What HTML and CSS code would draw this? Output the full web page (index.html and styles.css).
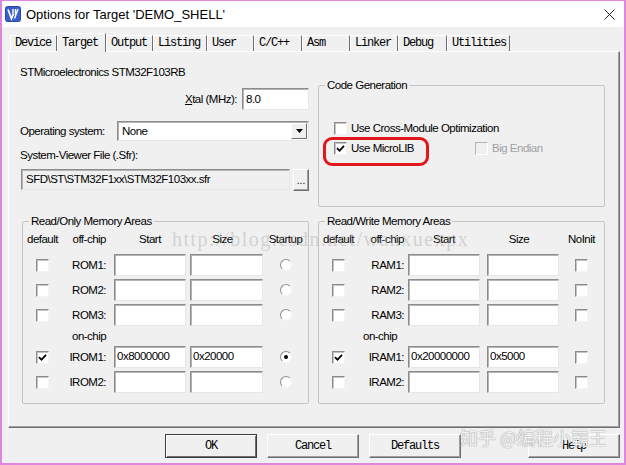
FILE: index.html
```html
<!DOCTYPE html>
<html>
<head>
<meta charset="utf-8">
<title>Options for Target</title>
<link rel="stylesheet" href="styles.css">
</head>
<body>
<div class="window">
  <div class="titlebar">
    <svg class="app-icon" viewBox="0 0 16 16" width="16" height="16">
      <rect x="0.5" y="0.5" width="15" height="15" rx="2" fill="#3a5fcd" stroke="#2a44a0"/>
      <path d="M3 3.5 L6.5 12.5 L8 8.5" fill="none" stroke="#fff" stroke-width="1.7"/>
      <path d="M8 3 V10 M10.5 3 V9 M13 3 L9.5 12.5" fill="none" stroke="#fff" stroke-width="1.4"/>
    </svg>
    <span class="title">Options for Target 'DEMO_SHELL'</span>
    <svg class="close" viewBox="0 0 11 11" width="11" height="11">
      <path d="M0.5 0.5 L10.5 10.5 M10.5 0.5 L0.5 10.5" stroke="#222" stroke-width="1" fill="none"/>
    </svg>
  </div>
  <div class="client">
    <div class="tabs">
      <div class="tab w47">Device</div>
      <div class="tab tab-active w49">Target</div>
      <div class="tab w47">Output</div>
      <div class="tab w54">Listing</div>
      <div class="tab w47">User</div>
      <div class="tab w48">C/C++</div>
      <div class="tab w48">Asm</div>
      <div class="tab w48">Linker</div>
      <div class="tab w49">Debug</div>
      <div class="tab w63">Utilities</div>
    </div>
    <div class="panel">
      <div class="top">
        <div class="col-left">
          <div class="chip">STMicroelectronics STM32F103RB</div>
          <div class="xtal-row">
            <span><u>X</u>tal (MHz):</span>
            <div class="edit xtal">8.0</div>
          </div>
          <div class="os-row">
            <span class="os-label">Operating system:</span>
            <div class="edit combo">
              <span class="combo-text">None</span>
              <span class="combo-btn">
                <svg viewBox="0 0 7 4" width="7" height="4"><path d="M0 0 H7 L3.5 4 Z" fill="#000"/></svg>
              </span>
            </div>
          </div>
          <div class="svf-label">System-Viewer File (.Sfr):</div>
          <div class="sfr-row">
            <div class="edit sfr">SFD\ST\STM32F1xx\STM32F103xx.sfr</div>
            <div class="btn-small">...</div>
          </div>
        </div>
        <fieldset class="group codegen">
          <legend>Code Generation</legend>
          <div class="check-row cross">
            <span class="cb"></span>
            <span>Use Cross-Module Optimization</span>
          </div>
          <div class="check-row micro">
            <div class="opt opt-micro">
              <span class="cb"><svg class="tick" viewBox="0 0 9 9" width="9" height="9"><path d="M1 4.2 L3.5 6.8 L8 1.8" fill="none" stroke="#000" stroke-width="1.8"/></svg></span>
              <span>Use MicroLIB</span>
            </div>
            <div class="opt disabled">
              <span class="cb cb-disabled"></span>
              <span>Big Endian</span>
            </div>
          </div>
          <div class="highlight"></div>
        </fieldset>
      </div>

      <div class="mem">
        <fieldset class="group memgroup">
          <legend>Read/Only Memory Areas</legend>
          <div class="memgrid rom">
            <span class="h-default">default</span>
            <span class="h-off">off-chip</span>
            <span class="h-start">Start</span>
            <span class="h-size">Size</span>
            <span class="h-last">Startup</span>

            <span class="cell-c"><span class="cb"></span></span>
            <span class="lbl">ROM1:</span>
            <span class="edit in-start"></span>
            <span class="edit in-size"></span>
            <span class="cell-c"><span class="radio"></span></span>

            <span class="cell-c"><span class="cb"></span></span>
            <span class="lbl">ROM2:</span>
            <span class="edit in-start"></span>
            <span class="edit in-size"></span>
            <span class="cell-c"><span class="radio"></span></span>

            <span class="cell-c"><span class="cb"></span></span>
            <span class="lbl">ROM3:</span>
            <span class="edit in-start"></span>
            <span class="edit in-size"></span>
            <span class="cell-c"><span class="radio"></span></span>

            <span></span>
            <span class="onchip">on-chip</span>
            <span></span><span></span><span></span>

            <span class="cell-c"><span class="cb"><svg class="tick" viewBox="0 0 9 9" width="9" height="9"><path d="M1 4.2 L3.5 6.8 L8 1.8" fill="none" stroke="#000" stroke-width="1.8"/></svg></span></span>
            <span class="lbl">IROM1:</span>
            <span class="edit in-start">0x8000000</span>
            <span class="edit in-size">0x20000</span>
            <span class="cell-c"><span class="radio radio-on"></span></span>

            <span class="cell-c"><span class="cb"></span></span>
            <span class="lbl">IROM2:</span>
            <span class="edit in-start"></span>
            <span class="edit in-size"></span>
            <span class="cell-c"><span class="radio"></span></span>
          </div>
        </fieldset>

        <fieldset class="group memgroup">
          <legend>Read/Write Memory Areas</legend>
          <div class="memgrid ram">
            <span class="h-default">default</span>
            <span class="h-off">off-chip</span>
            <span class="h-start">Start</span>
            <span class="h-size">Size</span>
            <span class="h-last">NoInit</span>

            <span class="cell-c"><span class="cb"></span></span>
            <span class="lbl">RAM1:</span>
            <span class="edit in-start"></span>
            <span class="edit in-size"></span>
            <span class="cell-c"><span class="cb"></span></span>

            <span class="cell-c"><span class="cb"></span></span>
            <span class="lbl">RAM2:</span>
            <span class="edit in-start"></span>
            <span class="edit in-size"></span>
            <span class="cell-c"><span class="cb"></span></span>

            <span class="cell-c"><span class="cb"></span></span>
            <span class="lbl">RAM3:</span>
            <span class="edit in-start"></span>
            <span class="edit in-size"></span>
            <span class="cell-c"><span class="cb"></span></span>

            <span></span>
            <span class="onchip">on-chip</span>
            <span></span><span></span><span></span>

            <span class="cell-c"><span class="cb"><svg class="tick" viewBox="0 0 9 9" width="9" height="9"><path d="M1 4.2 L3.5 6.8 L8 1.8" fill="none" stroke="#000" stroke-width="1.8"/></svg></span></span>
            <span class="lbl">IRAM1:</span>
            <span class="edit in-start">0x20000000</span>
            <span class="edit in-size">0x5000</span>
            <span class="cell-c"><span class="cb"></span></span>

            <span class="cell-c"><span class="cb"></span></span>
            <span class="lbl">IRAM2:</span>
            <span class="edit in-start"></span>
            <span class="edit in-size"></span>
            <span class="cell-c"><span class="cb"></span></span>
          </div>
        </fieldset>
      </div>
    </div>

    <div class="buttons">
      <div class="btn btn-default">OK</div>
      <div class="btn">Cancel</div>
      <div class="btn">Defaults</div>
      <div class="btn btn-help">Help</div>
    </div>
  </div>

  <div class="wm-csdn">http://blog.csdn.net/wanxuexpx</div>
  <div class="wm-zhihu">知乎 @编程小霸王</div>
</div>
</body>
</html>
```

FILE: styles.css
```css
* { box-sizing: border-box; }
html, body { margin: 0; padding: 0; }
body {
  width: 626px;
  height: 465px;
  overflow: hidden;
  background: #fff;
  font-family: "Liberation Sans", Arial, sans-serif;
  font-size: 11.5px;
  letter-spacing: -0.5px;
  color: #000;
}

.window {
  position: relative;
  width: 626px;
  height: 465px;
  border: 1px solid #df84df;
  border-left-width: 2px;
  border-right-width: 2px;
  border-bottom-width: 2px;
  background: #f0f0f0;
  display: flex;
  flex-direction: column;
}

/* title bar */
.titlebar {
  flex: none;
  height: 26px;
  background: #fff;
  display: flex;
  align-items: center;
}
.app-icon { margin-left: 3px; flex: none; }
.title {
  margin-left: 5px;
  font-size: 13px;
  letter-spacing: 0;
  color: #000;
}
.close { margin-left: auto; margin-right: 9px; flex: none; }

/* client area */
.client { flex: 1; display: flex; flex-direction: column; }

.tabs {
  height: 24px;
  padding-top: 6px;
  padding-left: 8px;
  display: flex;
  align-items: flex-end;
}
.tab {
  height: 16px;
  padding-left: 4px;
  font-family: "Liberation Mono", "Courier New", monospace;
  font-size: 12px;
  letter-spacing: -1.2px;
  line-height: 15px;
  border-top: 1px solid #fff;
  border-left: 1px solid #fff;
  border-right: 1px solid #6e6e6e;
  white-space: nowrap;
  overflow: hidden;
}
.tab-active {
  position: relative;
  z-index: 1;
  height: 19px;
  margin-bottom: -1px;
  line-height: 18px;
  background: #f0f0f0;
}
.w47 { width: 47px; }
.w48 { width: 48px; }
.w49 { width: 49px; }
.w54 { width: 54px; }
.w63 { width: 63px; }

.panel {
  margin-left: 6px;
  width: 612px;
  height: 377px;
  border-top: 1px solid #fff;
  border-left: 1px solid #fff;
  border-right: 1px solid #6e6e6e;
  border-bottom: 1px solid #6e6e6e;
  box-shadow: inset -1px -1px 0 #a0a0a0;
  padding: 12px 0 0 11px;
}

.top {
  display: grid;
  grid-template-columns: 289px 287px;
  column-gap: 9px;
  align-items: start;
}

.chip { line-height: 16px; }

.edit {
  display: block;
  background: #fff;
  border: 1px solid;
  border-color: #8c8c8c #e6e6e6 #e6e6e6 #8c8c8c;
  box-shadow: inset 1px 1px 0 #b4b4b4;
  padding-left: 3px;
  line-height: 18px;
  white-space: nowrap;
  overflow: hidden;
}

.xtal-row {
  margin-top: 8px;
  height: 22px;
  display: flex;
  justify-content: flex-end;
  align-items: center;
  gap: 5px;
}
.xtal { width: 67px; height: 22px; line-height: 20px; }

.os-row {
  margin-top: 11px;
  height: 20px;
  display: flex;
  align-items: center;
}
.os-label { width: 97px; }
.combo {
  width: 192px;
  height: 20px;
  display: flex;
  align-items: center;
  padding-left: 4px;
  padding-right: 1px;
}
.combo-text { flex: 1; }
.combo-btn {
  width: 16px;
  height: 16px;
  background: #f0f0f0;
  border: 1px solid;
  border-color: #fff #6e6e6e #6e6e6e #fff;
  display: flex;
  align-items: center;
  justify-content: center;
}

.svf-label { margin-top: 6px; line-height: 16px; }

.sfr-row {
  margin-top: 6px;
  padding-left: 1px;
  display: flex;
  gap: 3px;
}
.sfr {
  width: 269px;
  height: 21px;
  background: #f0f0f0;
  padding-left: 4px;
  line-height: 19px;
}
.btn-small {
  width: 16px;
  height: 22px;
  border: 1px solid;
  border-color: #fff #6e6e6e #6e6e6e #fff;
  box-shadow: inset -1px -1px 0 #a0a0a0;
  text-align: center;
  line-height: 22px;
  font-size: 10px;
  letter-spacing: 0;
}

/* group boxes */
fieldset.group {
  margin: 0;
  padding: 0;
  min-width: 0;
  border: 1px solid #c4c4c4;
  border-radius: 2px;
}
fieldset.group legend {
  margin-left: 6px;
  padding: 0 2px;
  line-height: 14px;
}

.codegen {
  position: relative;
  margin-top: 14px !important;
  height: 129px;
}
.check-row {
  height: 16px;
  padding-left: 15px;
  display: flex;
  align-items: center;
}
.cross { margin-top: 28px; gap: 4px; }
.micro { margin-top: 4px; }
.opt { display: flex; align-items: center; gap: 4px; }
.opt-micro { width: 141px; }
.disabled { color: #a0a0a0; }

.highlight {
  position: absolute;
  left: 4px;
  top: 45px;
  width: 106px;
  height: 29px;
  border: 3px solid #e3161d;
  border-radius: 9px;
}

/* checkbox + radio */
.cb {
  width: 13px;
  height: 13px;
  flex: none;
  background: #fff;
  border: 1px solid;
  border-color: #8c8c8c #f4f4f4 #f4f4f4 #8c8c8c;
  box-shadow: inset 1px 1px 0 #c4c4c4;
  display: inline-flex;
  align-items: center;
  justify-content: center;
}
.cb-disabled { background: #f0f0f0; border-color: #b4b4b4 #fff #fff #b4b4b4; box-shadow: none; }
.tick { display: block; }

.radio {
  position: relative;
  width: 12px;
  height: 12px;
  border-radius: 50%;
  background: #fff;
  border: 1px solid;
  border-color: #8c8c8c #f4f4f4 #f4f4f4 #8c8c8c;
  display: inline-block;
}
.radio-on::after {
  content: "";
  position: absolute;
  left: 3px;
  top: 3px;
  width: 4px;
  height: 4px;
  border-radius: 50%;
  background: #000;
}

/* memory areas */
.mem {
  margin-top: 7px;
  margin-left: 2px;
  display: grid;
  grid-template-columns: 287px 287px;
  column-gap: 9px;
}
.memgroup { height: 190px; }
.memgrid {
  padding-top: 3px;
  display: grid;
  grid-template-rows: 20px 22px 22px 22px 14px 22px 22px;
  row-gap: 3px;
  align-items: center;
}
.rom { grid-template-columns: 39px 52px 76px 73px 1fr; }
.ram { grid-template-columns: 39px 50px 79px 72px 1fr; }

.memgrid > span { line-height: 16px; }
.h-default, .h-last { text-align: center; }
.memgrid .h-default, .memgrid .h-off, .memgrid .h-start, .memgrid .h-size, .memgrid .h-last { align-self: start; }
.h-off { text-align: right; }
.rom .h-off { padding-right: 8px; }
.ram .h-off { padding-right: 4px; }
.h-start { width: 72px; text-align: center; }
.h-size { text-align: center; padding-right: 8px; }
.rom .h-size { width: 73px; }
.ram .h-size { width: 72px; }

.cell-c { display: flex; justify-content: center; align-items: center; }
.lbl { text-align: right; }
.rom .lbl { padding-right: 8px; }
.ram .lbl { padding-right: 4px; }
.memgrid > .onchip { text-align: left; line-height: 14px; }
.rom .onchip { padding-left: 10px; }
.ram .onchip { padding-left: 5px; }

.memgrid .edit { height: 22px; line-height: 19px; padding-left: 2px; }
.in-start { width: 72px; }
.rom .in-size { width: 73px; }
.ram .in-size { width: 72px; }

/* bottom buttons */
.buttons {
  padding-top: 6px;
  padding-left: 163px;
  display: flex;
  gap: 10px;
}
.btn {
  width: 92px;
  height: 24px;
  border: 1px solid;
  border-color: #fff #6e6e6e #6e6e6e #fff;
  box-shadow: inset -1px -1px 0 #a0a0a0;
  text-align: center;
  line-height: 22px;
  font-family: "Liberation Mono", "Courier New", monospace;
  font-size: 12px;
  letter-spacing: -1.2px;
}
.btn-default {
  border-color: #3c3c3c;
  box-shadow: inset 1px 1px 0 #fff, inset -1px -1px 0 #6e6e6e;
}
.btn-help { margin-left: 57px; }

/* watermarks */
.wm-csdn {
  position: absolute;
  left: 170px;
  top: 227px;
  font-family: "Liberation Serif", serif;
  font-size: 20px;
  letter-spacing: 1.5px;
  line-height: 22px;
  color: rgba(160, 160, 160, 0.4);
  white-space: nowrap;
  pointer-events: none;
}
.wm-zhihu {
  position: absolute;
  left: 458px;
  top: 424px;
  font-family: "Noto Sans CJK SC", sans-serif;
  font-size: 18px;
  letter-spacing: 0;
  line-height: 24px;
  color: rgba(255, 255, 255, 0.9);
  text-shadow: 0 0 1px #9a9a9a, 0 0 1px #9a9a9a;
  white-space: nowrap;
  pointer-events: none;
}
```
